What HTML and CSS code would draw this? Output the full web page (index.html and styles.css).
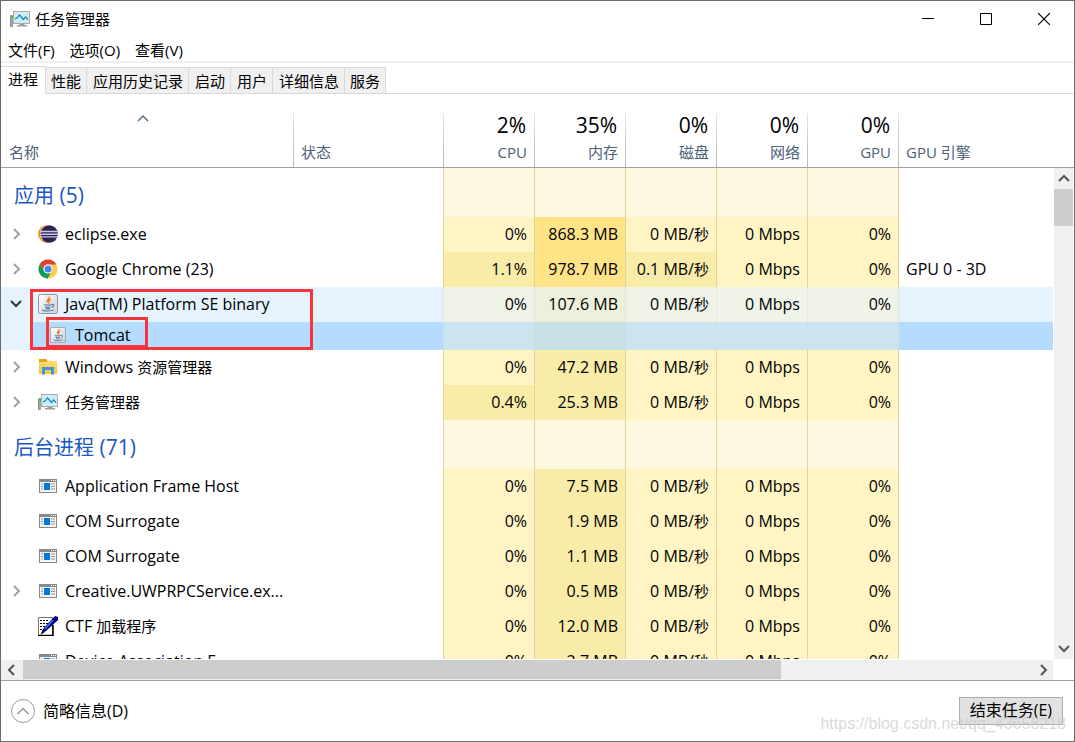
FILE: index.html
```html
<!DOCTYPE html>
<html lang="zh-CN">
<head>
<meta charset="utf-8">
<title>任务管理器</title>
<link rel="stylesheet" href="styles.css">
</head>
<body>
<svg class="defs" aria-hidden="true">
  <defs>
    <linearGradient id="folder" x1="0" y1="0" x2="0" y2="1"><stop offset="0" stop-color="#ffdd7a"/><stop offset="1" stop-color="#fbc440"/></linearGradient>
    <linearGradient id="plate" x1="0" y1="0" x2="1" y2="1"><stop offset="0" stop-color="#ffffff"/><stop offset="1" stop-color="#c9d0d6"/></linearGradient>
  </defs>
  <symbol id="monitor" viewBox="0 0 20 20">
    <path d="M0 6h3v12H0z" fill="#a4a8aa"/><path d="M1 7h2v2H1z" fill="#35c822"/><path d="M0 9h1v9H0z" fill="#85898b"/>
    <path d="M3 2h17v13H3z" fill="#a9adaf"/><path d="M4 3h15v11H4z" fill="#e2e5e6"/><path d="M5 4h13v9H5z" fill="#c6effc"/>
    <path d="M5 10l2.500-1.500 2-2.500 4 4.500 2-2.500 2.500 2.500" fill="none" stroke="#1683b5" stroke-width="1.200"/>
    <path d="M10 15h4l1 1h2v1.500H7V16h2z" fill="#9b9fa1"/>
  </symbol>
  <symbol id="eclipse" viewBox="0 0 20 20">
    <circle cx="9" cy="10" r="9" fill="#f7941e"/><circle cx="10.800" cy="10" r="8.900" fill="#fff"/><circle cx="11.200" cy="10" r="8.700" fill="#2c2255"/>
    <path d="M2.800 7.500h16.800M2.500 10.200h17.500M2.800 12.900h16.800" stroke="#c9c6df" stroke-width="1.400"/>
  </symbol>
  <symbol id="chrome" viewBox="0 0 20 20">
    <circle cx="10" cy="10" r="9.500" fill="#fc4"/>
    <path d="M1.800 5.200A9.500 9.500 0 0 1 18.300 5.500H10A4.500 4.500 0 0 0 5.900 12z" fill="#db4437"/>
    <path d="M1.800 5.200A9.500 9.500 0 0 0 9.500 19.500L13.800 12.200A4.500 4.500 0 0 1 6 12z" fill="#0f9d58"/>
    <circle cx="10" cy="10" r="4.500" fill="#fff"/><circle cx="10" cy="10" r="3.500" fill="#4285f4"/>
  </symbol>
  <symbol id="java" viewBox="0 0 20 20">
    <rect x=".5" y=".5" width="19" height="19" rx="2" fill="url(#plate)" stroke="#8c99a4"/>
    <path d="M11 2.500c1.500 2-3.500 3.500-1.500 6M13 5c-3 1.500-3 2.500-1.500 4.500" fill="none" stroke="#ee7b22" stroke-width="1.400"/>
    <path d="M6 10.500c1.500.8 6 .8 7.500 0M7 12.800c1.500.6 4 .6 5.500 0M7.500 14.600c1.500.5 3 .5 4.500 0M13.500 10.500c3-.8 3 2 .3 2.800M4.500 15.600c-1 1.800 10 1.800 11 .2" fill="none" stroke="#557c9f" stroke-width="1.200"/>
  </symbol>
  <symbol id="explorer" viewBox="0 0 20 20">
    <path d="M1 2h7l1.500 2H19v13H1z" fill="url(#folder)"/><path d="M1 2h7l1.500 2-1 1H1z" fill="#e7a114"/>
    <path d="M4 10h12v7.500h-3V13H7v4.500H4z" fill="#4096dc"/>
  </symbol>
  <symbol id="app" viewBox="0 0 20 20">
    <path d="M1 3h18v14H1z" fill="#868a8d"/><path d="M2 6h16v10H2z" fill="#f5f5f5"/><path d="M6 7h6v7H6z" fill="#0078d7"/>
    <path d="M3 8h2M3 10.500h2M3 13h2M13 8h4M13 10.500h4M13 13h4" stroke="#8c9499"/><path d="M13 4.500h1M15 4.500h1M17 4.500h1" stroke="#fff"/>
  </symbol>
  <symbol id="ctf" viewBox="0 0 20 20">
    <path d="M.5 1.500h14v18H.5z" fill="#fff" stroke="#777"/><path d="M15 9v10.500H0" fill="none" stroke="#000" stroke-width="1.500"/>
    <path d="M2 4.500h9M2 7.500h8M2 10.500h6M2 13.500h3" stroke="#000" stroke-dasharray="2 1"/>
    <path d="M3 18l2-5L15 2l2-2 3 1v3L8 15z" fill="#000080"/><path d="M7 13l8-9" stroke="#3f6fff" stroke-width="1.500"/><path d="M2.500 18.500l2-4 2 2z" fill="#111"/>
  </symbol>
  <symbol id="right" viewBox="0 0 12 12"><path d="M3 1l5 5-5 5" fill="none" stroke="currentColor" stroke-width="2"/></symbol>
  <symbol id="left" viewBox="0 0 12 12"><path d="M8 1L3 6l5 5" fill="none" stroke="currentColor" stroke-width="2"/></symbol>
  <symbol id="down" viewBox="0 0 12 12"><path d="M1 3l5 5 5-5" fill="none" stroke="currentColor" stroke-width="2"/></symbol>
  <symbol id="up" viewBox="0 0 12 12"><path d="M1 8l5-5 5 5" fill="none" stroke="currentColor" stroke-width="2"/></symbol>
</svg>
<div class="window">
  <header class="titlebar">
    <svg class="icon"><use href="#monitor"/></svg>
    <h1 class="title">任务管理器</h1>
    <div class="controls">
      <button class="control" aria-label="最小化"><svg viewBox="0 0 12 12"><path d="M0 5.500h12" stroke="#000"/></svg></button>
      <button class="control" aria-label="最大化"><svg viewBox="0 0 12 12"><path d="M.5.5h11v11H.5z" fill="none" stroke="#000"/></svg></button>
      <button class="control" aria-label="关闭"><svg viewBox="0 0 12 12"><path d="M0 0l12 12M12 0L0 12" stroke="#000" stroke-width="1.200"/></svg></button>
    </div>
  </header>
  <nav class="menu">
    <button class="menu-item">文件(F)</button>
    <button class="menu-item">选项(O)</button>
    <button class="menu-item">查看(V)</button>
  </nav>
  <div class="tabs" role="tablist">
    <button class="tab active" role="tab" aria-selected="true">进程</button>
    <button class="tab" role="tab">性能</button>
    <button class="tab" role="tab">应用历史记录</button>
    <button class="tab" role="tab">启动</button>
    <button class="tab" role="tab">用户</button>
    <button class="tab" role="tab">详细信息</button>
    <button class="tab" role="tab">服务</button>
  </div>
  <main class="list">
    <div class="viewport">
      <table class="processes">
        <colgroup><col class="col-name"><col class="col-status"><col class="col-num"><col class="col-num"><col class="col-num"><col class="col-num"><col class="col-num"><col></colgroup>
        <thead>
          <tr>
            <th class="left first"><span class="sort"><svg viewBox="0 0 12 12"><path d="M1 8l5-5 5 5" fill="none" stroke="#5a6f8c" stroke-width="1.500"/></svg></span>名称</th>
            <th class="left">状态</th>
            <th><strong class="total">2%</strong>CPU</th>
            <th><strong class="total">35%</strong>内存</th>
            <th><strong class="total">0%</strong>磁盘</th>
            <th><strong class="total">0%</strong>网络</th>
            <th><strong class="total">0%</strong>GPU</th>
            <th class="left engine">GPU 引擎</th>
          </tr>
        </thead>
        <tbody>
          <tr class="group"><th colspan="2"><span class="han">应用</span> (5)</th><td></td><td></td><td></td><td></td><td></td><td></td></tr>
          <tr><td><div class="name"><button class="expand" aria-label="展开"><svg><use href="#right"/></svg></button><svg class="icon"><use href="#eclipse"/></svg><span>eclipse.exe</span></div></td><td></td><td>0%</td><td class="hot">868.3 MB</td><td>0 MB/<span class="han">秒</span></td><td>0 Mbps</td><td>0%</td><td></td></tr>
          <tr><td><div class="name"><button class="expand" aria-label="展开"><svg><use href="#right"/></svg></button><svg class="icon"><use href="#chrome"/></svg><span>Google Chrome (23)</span></div></td><td></td><td class="warm">1.1%</td><td class="hot">978.7 MB</td><td class="warm">0.1 MB/<span class="han">秒</span></td><td>0 Mbps</td><td>0%</td><td>GPU 0 - 3D</td></tr>
          <tr class="parent"><td><div class="name"><button class="expand" aria-label="折叠"><svg><use href="#down"/></svg></button><svg class="icon"><use href="#java"/></svg><span>Java(TM) Platform SE binary</span></div></td><td></td><td>0%</td><td class="warm">107.6 MB</td><td>0 MB/<span class="han">秒</span></td><td>0 Mbps</td><td>0%</td><td></td></tr>
          <tr class="child"><td><div class="name"><svg class="icon"><use href="#java"/></svg><span>Tomcat</span></div></td><td></td><td></td><td class="warm"></td><td></td><td></td><td></td><td></td></tr>
          <tr><td><div class="name"><button class="expand" aria-label="展开"><svg><use href="#right"/></svg></button><svg class="icon"><use href="#explorer"/></svg><span>Windows <span class="han">资源管理器</span></span></div></td><td></td><td>0%</td><td class="warm">47.2 MB</td><td>0 MB/<span class="han">秒</span></td><td>0 Mbps</td><td>0%</td><td></td></tr>
          <tr><td><div class="name"><button class="expand" aria-label="展开"><svg><use href="#right"/></svg></button><svg class="icon"><use href="#monitor"/></svg><span class="han">任务管理器</span></div></td><td></td><td class="warm">0.4%</td><td class="warm">25.3 MB</td><td>0 MB/<span class="han">秒</span></td><td>0 Mbps</td><td>0%</td><td></td></tr>
          <tr class="group"><th colspan="2"><span class="han">后台进程</span> (71)</th><td></td><td></td><td></td><td></td><td></td><td></td></tr>
          <tr><td><div class="name leaf"><svg class="icon"><use href="#app"/></svg><span>Application Frame Host</span></div></td><td></td><td>0%</td><td class="warm">7.5 MB</td><td>0 MB/<span class="han">秒</span></td><td>0 Mbps</td><td>0%</td><td></td></tr>
          <tr><td><div class="name leaf"><svg class="icon"><use href="#app"/></svg><span>COM Surrogate</span></div></td><td></td><td>0%</td><td class="warm">1.9 MB</td><td>0 MB/<span class="han">秒</span></td><td>0 Mbps</td><td>0%</td><td></td></tr>
          <tr><td><div class="name leaf"><svg class="icon"><use href="#app"/></svg><span>COM Surrogate</span></div></td><td></td><td>0%</td><td class="warm">1.1 MB</td><td>0 MB/<span class="han">秒</span></td><td>0 Mbps</td><td>0%</td><td></td></tr>
          <tr><td><div class="name"><button class="expand" aria-label="展开"><svg><use href="#right"/></svg></button><svg class="icon"><use href="#app"/></svg><span>Creative.UWPRPCService.ex...</span></div></td><td></td><td>0%</td><td class="warm">0.5 MB</td><td>0 MB/<span class="han">秒</span></td><td>0 Mbps</td><td>0%</td><td></td></tr>
          <tr><td><div class="name leaf"><svg class="icon"><use href="#ctf"/></svg><span>CTF <span class="han">加载程序</span></span></div></td><td></td><td>0%</td><td class="warm">12.0 MB</td><td>0 MB/<span class="han">秒</span></td><td>0 Mbps</td><td>0%</td><td></td></tr>
          <tr><td><div class="name leaf"><svg class="icon"><use href="#app"/></svg><span>Device Association F...</span></div></td><td></td><td>0%</td><td class="warm">2.7 MB</td><td>0 MB/<span class="han">秒</span></td><td>0 Mbps</td><td>0%</td><td></td></tr>
        </tbody>
      </table>
      <div class="mark mark-outer"></div>
      <div class="mark mark-inner"></div>
    </div>
    <div class="side">
      <div class="side-head"></div>
      <div class="vbar">
        <button class="arrow" aria-label="向上"><svg><use href="#up"/></svg></button>
        <div class="vthumb"></div>
        <button class="arrow last" aria-label="向下"><svg><use href="#down"/></svg></button>
      </div>
    </div>
  </main>
  <div class="hbar">
    <button class="arrow wide" aria-label="向左"><svg><use href="#left"/></svg></button>
    <div class="htrack"><div class="hthumb"></div></div>
    <button class="arrow" aria-label="向右"><svg><use href="#right"/></svg></button>
  </div>
  <footer class="footer">
    <button class="brief"><svg class="circle" viewBox="0 0 24 24"><circle cx="12" cy="12" r="11.500" fill="none" stroke="#999"/><path d="M6.500 15l5.500-5.500 5.500 5.500" fill="none" stroke="#999" stroke-width="1.500"/></svg>简略信息(D)</button>
    <button class="end">结束任务(E)</button>
    <span class="watermark">https://blog.csdn.net/qq_43658218</span>
  </footer>
</div>
</body>
</html>
```

FILE: styles.css
```css
* { box-sizing: border-box; }
body {
  margin: 0;
  background: #fff;
  color: #000;
  font: 15px/20px "Open Sans", "Noto Sans CJK SC", sans-serif;
}
button {
  margin: 0;
  padding: 0;
  border: 0;
  background: none;
  color: inherit;
  font: inherit;
}
svg { display: block; }
.defs { position: absolute; width: 0; height: 0; }
.window {
  position: relative;
  display: flex;
  flex-direction: column;
  height: 100vh;
  border: 1px solid #6b6b6b;
  overflow: hidden;
}
.icon { flex: none; width: 20px; height: 20px; }

.titlebar { display: flex; align-items: center; height: 36px; padding-left: 9px; gap: 5px; }
.title { margin: 0; font-size: 15px; font-weight: 400; }
.controls { display: flex; margin: 0 1px 0 auto; }
.control { display: flex; align-items: center; justify-content: center; width: 58px; height: 36px; }
.control svg { width: 12px; height: 12px; }

.menu { display: flex; gap: 15px; height: 26px; padding: 2px 7px 0; border-bottom: 2px solid #f0f0f0; }
.tabs {
  display: flex;
  align-items: flex-end;
  height: 31px;
  border-bottom: 1px solid #d9d9d9;
}
.tab {
  height: 26px;
  padding: 0 5px 0 6px;
  border: 1px solid #d9d9d9;
  border-left: 0;
  border-bottom: 0;
  background: #f0f0f0;
}
.tab:last-child, .tab:nth-child(2) { padding-left: 5px; }
.tab.active { height: 28px; margin-bottom: -1px; padding: 0 7px 3px; background: #fff; }

.list { display: flex; flex: 1; min-height: 0; overflow: hidden; }
.viewport { position: relative; flex: 1; min-width: 0; overflow: hidden; }
.processes { width: 100%; table-layout: fixed; border-spacing: 0; }
.col-name { width: 293px; }
.col-status { width: 150px; }
.col-num { width: 91px; }
thead th {
  height: 74px;
  padding: 0 8px 5px;
  border-bottom: 1px solid #a0a0a0;
  background: linear-gradient(#e6e6e6, #b4b4b4) right bottom / 1px 54px no-repeat;
  color: #4c607a;
  font-weight: 400;
  text-align: right;
  vertical-align: bottom;
}
thead .left { text-align: left; padding-left: 7px; }
thead .first { padding-left: 8px; }
thead .engine { background: none; }
.total { display: block; margin: 0 1px 5px 0; color: #000; font-size: 21px; line-height: 24px; font-weight: 400; }
.sort { display: flex; justify-content: center; margin: 0 10px 17px 0; }
.sort svg { width: 12px; height: 12px; }
tbody { font-size: 16px; }
.han { font-size: 15px; }
tbody td { height: 35px; padding: 0 7px 2px; white-space: nowrap; }
tbody td:nth-last-child(-n+6):not(:last-child) {
  border-right: 1px solid #e6d39b;
  background: #fff4c4;
  text-align: right;
}
tbody td:nth-last-child(7) { border-right: 1px solid #e6d39b; }
tbody td:first-child { padding: 0 0 2px; }
tbody td.warm:nth-last-child(n) { background: #f9eca8; }
tbody td.hot:nth-last-child(n) { background: #ffe387; }
tbody .group th {
  height: 49px;
  padding: 6px 13px 0;
  border-right: 1px solid #e6d39b;
  color: #1d58c0;
  font-size: 21px;
  font-weight: 400;
  line-height: 28px;
  text-align: left;
}
.group .han { font-size: 20px; }
tbody .group td:nth-last-child(-n+6):not(:last-child) { background: #fff8e1; }
.name { display: flex; align-items: center; gap: 7px; }
.name.leaf { padding-left: 37px; }
.expand { display: flex; justify-content: center; width: 30px; padding-left: 2px; color: #a0a0a0; }
.expand svg { flex: none; width: 12px; height: 12px; }
.parent .expand { padding-left: 0; color: #333; }
.parent { background: #e5f3ff; }
tbody .parent td:nth-last-child(-n+7):not(:last-child) { border-color: #e6e6dc; }
tbody .parent td:nth-last-child(-n+6):not(:last-child) { background: #eff3e8; }
tbody .parent td.warm:nth-last-child(n):not(:last-child) { background: #edf0da; }
.child { background: #b5dcff; }
tbody .child td { height: 28px; }
tbody .child td:first-child { background: linear-gradient(#e5f3ff, #e5f3ff) left / 32px 100% no-repeat; }
tbody .child td:nth-last-child(-n+7):not(:last-child) { border-color: #d0dedf; }
tbody .child td:nth-last-child(-n+6):not(:last-child) { background: #cce4f0; }
tbody .child td.warm:nth-last-child(n):not(:last-child) { background: #c8e1e7; }
.child .name { gap: 9px; padding-left: 49px; }
.child .icon { width: 16px; height: 16px; }

.mark { position: absolute; border: 3px solid #f8333c; pointer-events: none; }
.mark-outer { left: 29px; top: 195px; width: 283px; height: 61px; }
.mark-inner { left: 45px; top: 223px; width: 102px; height: 31px; }

.side { display: flex; flex-direction: column; width: 21px; }
.side-head { height: 74px; border-bottom: 1px solid #a0a0a0; }
.vbar { display: flex; flex: 1; flex-direction: column; margin: 0 1px; background: #f0f0f0; }
.arrow { display: flex; align-items: center; justify-content: center; flex: none; width: 19px; height: 21px; color: #555; }
.arrow.wide { width: 22px; }
.arrow svg { width: 12px; height: 12px; }
.arrow.last { margin-top: auto; }
.vthumb { height: 37px; background: #cdcdcd; }
.hbar { display: flex; align-items: center; height: 21px; margin-right: 21px; border-top: 1px solid #fff; background: #f0f0f0; }
.htrack { flex: 1; align-self: stretch; }
.hthumb { width: 75%; height: 19px; background: #cdcdcd; }
.footer {
  position: relative;
  display: flex;
  align-items: center;
  justify-content: space-between;
  height: 61px;
  padding: 0 11px 0 10px;
  border-top: 1px solid #a0a0a0;
  font-size: 16px;
}
.brief { display: flex; align-items: center; gap: 8px; }
.circle { width: 24px; height: 24px; }
.end { height: 28px; padding: 0 10px 2px; border: 1px solid #adadad; background: #e1e1e1; }
.watermark {
  position: absolute;
  right: 8px;
  bottom: 7px;
  color: rgba(205, 205, 205, .75);
  font: 16px/20px "Liberation Sans", sans-serif;
  pointer-events: none;
}
```
